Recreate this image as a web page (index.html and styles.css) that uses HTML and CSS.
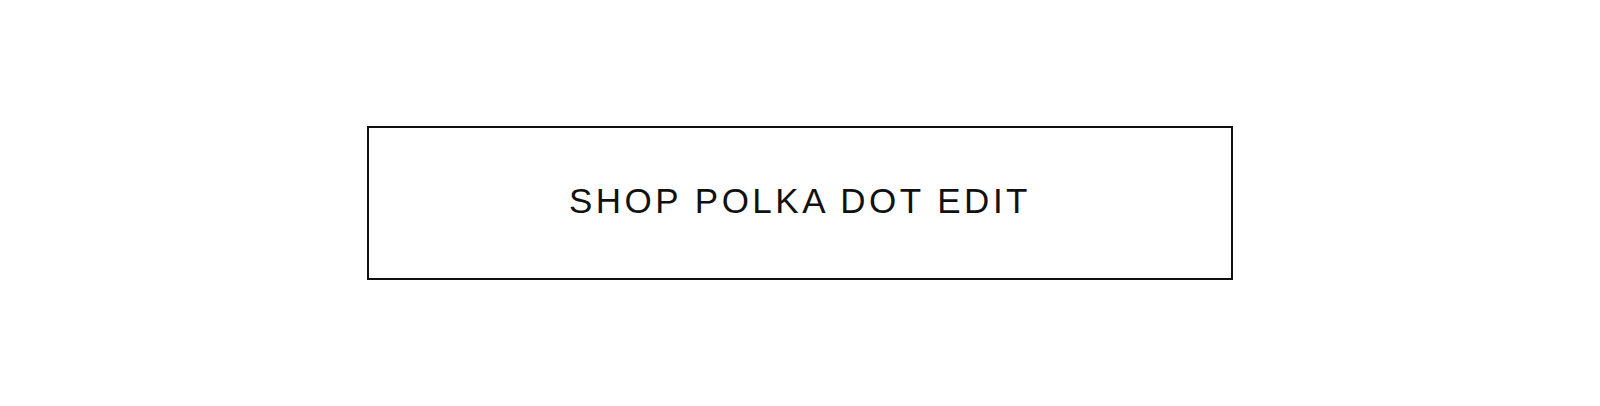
FILE: index.html
```html
<!DOCTYPE html>
<html>
  <head>
    <link rel="stylesheet" href="styles.css">
  </head>
  <body>
    <div class="banner">
      <a class="shop-button" href="#">SHOP POLKA DOT EDIT</a>
    </div>
  </body>
</html>
```
FILE: styles.css
```css
body {
  margin: 0;
  background-color: #fff;
  font-family: "Liberation Sans", Arial, sans-serif;
}
.banner {
  display: flex;
  justify-content: center;
  padding-top: 126px;
}
.shop-button {
  box-sizing: border-box;
  width: 866px;
  height: 154px;
  border: 2px solid #111;
  display: flex;
  justify-content: center;
  align-items: center;
  padding-bottom: 5px;
  color: #111;
  text-decoration: none;
  font-size: 35px;
  font-weight: 300;
  letter-spacing: 3.5px;
}
```
